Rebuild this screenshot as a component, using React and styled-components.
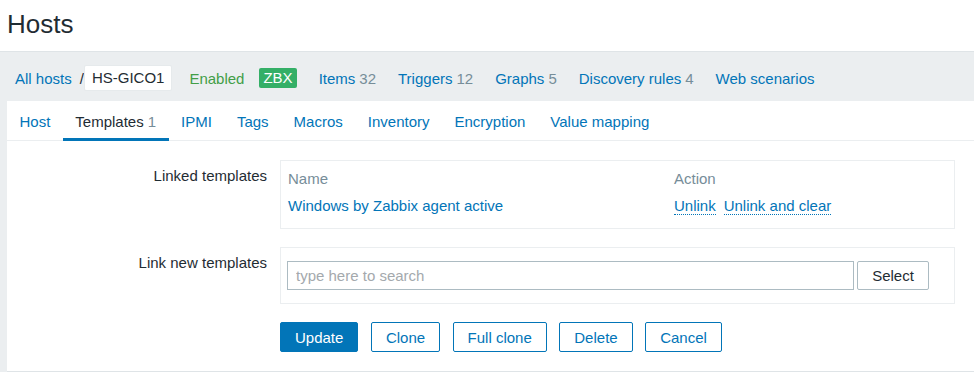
import React from "react";
import styled, { createGlobalStyle } from "styled-components";

const Global = createGlobalStyle`
  html, body {
    margin: 0;
    padding: 0;
    background: #ffffff;
    overflow: hidden;
  }
  body {
    font-family: "Liberation Sans", Arial, sans-serif;
    font-size: 15px;
    color: #1f2c33;
  }
`;

const Page = styled.div`
  width: 992px;
  height: 372px;
  display: flex;
  flex-direction: column;
`;

const Header = styled.div`
  height: 51px;
  display: flex;
  align-items: center;
  padding-left: 7px;
  border-bottom: 1px solid #dfe4e7;
`;

const Title = styled.h1`
  margin: 0;
  margin-top: -3px;
  font-size: 26px;
  font-weight: 400;
  color: #1f2c33;
`;

const Body = styled.div`
  flex: 1;
  background: #ebeef0;
  display: flex;
  flex-direction: column;
  padding-left: 7px;
`;

const Crumbs = styled.div`
  height: 46px;
  padding-top: 3px;
  display: flex;
  align-items: center;
  padding-left: 8px;
`;

const CrumbLink = styled.a`
  color: #0275b8;
  text-decoration: none;
  margin-right: ${(p) => p.$gap ?? 22}px;
  white-space: nowrap;
`;

const Sep = styled.span`
  color: #1f2c33;
  margin: 0 0 0 8px;
`;

const HostBox = styled.span`
  background: #fff;
  border: 1px solid #e6eaec;
  padding: 2px 7px;
  height: 20px;
  line-height: 20px;
  border-radius: 2px;
  margin-right: 17px;
`;

const Enabled = styled.span`
  color: #429e47;
  margin-right: 15px;
`;

const Badge = styled.span`
  background: #34af67;
  color: #fff;
  padding: 0 4px;
  height: 20px;
  line-height: 20px;
  border-radius: 2px;
  margin-right: 22px;
`;

const Count = styled.span`
  color: #768d99;
  margin-left: 4px;
`;

const Panel = styled.div`
  flex: 1;
  background: #fff;
  border-bottom: 1px solid #dfe4e7;
  display: flex;
  flex-direction: column;
`;

const Tabs = styled.div`
  height: 39px;
  display: flex;
  border-bottom: 1px solid #ebeef0;
`;

const Tab = styled.a`
  padding: 4px 12.5px 0;
  display: flex;
  align-items: center;
  color: ${(p) => (p.$active ? "#1f2c33" : "#0275b8")};
  text-decoration: none;
  border-bottom: 3px solid ${(p) => (p.$active ? "#0275b8" : "transparent")};
  margin-bottom: -1px;
`;

const Form = styled.div`
  display: grid;
  grid-template-columns: 260px 675px;
  column-gap: 13px;
  row-gap: 18px;
  padding-top: 19px;
`;

const Label = styled.div`
  text-align: right;
  padding-top: 7px;
`;

const Box = styled.div`
  border: 1px solid #ebeef0;
  padding: ${(p) => p.$pad};
`;

const Table = styled.table`
  width: 100%;
  border-collapse: collapse;
  td,
  th {
    text-align: left;
    font-weight: 400;
  }
  th {
    color: #768d99;
    line-height: 22px;
    padding: 7px 0 0;
  }
  td {
    line-height: 23px;
    padding: 4px 0 11px;
  }
`;

const Link = styled.a`
  color: #0275b8;
  text-decoration: none;
`;

const Dotted = styled.a`
  color: #0275b8;
  text-decoration: none;
  border-bottom: 1px dotted #0275b8;
  margin-right: 8px;
`;

const MultiRow = styled.div`
  display: flex;
  gap: 3px;
`;

const Input = styled.input`
  width: 567px;
  height: 29px;
  box-sizing: border-box;
  border: 1px solid #acbbc2;
  padding: 0 8px;
  font-family: inherit;
  font-size: 15px;
  color: #1f2c33;
  &::placeholder {
    color: #a4a9ad;
  }
`;

const SelectBtn = styled.button`
  width: 72px;
  height: 29px;
  background: #fff;
  border: 1px solid #acbbc2;
  border-radius: 2px;
  font-family: inherit;
  font-size: 15px;
  color: #1f2c33;
`;

const Actions = styled.div`
  display: flex;
  gap: 12.5px;
`;

const Button = styled.button`
  height: 30px;
  padding: 0 ${(p) => p.$px || 14}px;
  border: 1px solid #0275b8;
  border-radius: 2px;
  background: ${(p) => (p.$primary ? "#0275b8" : "#fff")};
  color: ${(p) => (p.$primary ? "#fff" : "#0275b8")};
  font-family: inherit;
  font-size: 15px;
`;

export default function App() {
  return (
    <Page>
      <Global />
      <Header>
        <Title>Hosts</Title>
      </Header>
      <Body>
        <Crumbs>
          <CrumbLink $gap={0}>All hosts</CrumbLink>
          <Sep>/</Sep>
          <HostBox>HS-GICO1</HostBox>
          <Enabled>Enabled</Enabled>
          <Badge>ZBX</Badge>
          <CrumbLink>
            Items<Count>32</Count>
          </CrumbLink>
          <CrumbLink>
            Triggers<Count>12</Count>
          </CrumbLink>
          <CrumbLink>
            Graphs<Count>5</Count>
          </CrumbLink>
          <CrumbLink>
            Discovery rules<Count>4</Count>
          </CrumbLink>
          <CrumbLink>Web scenarios</CrumbLink>
        </Crumbs>
        <Panel>
          <Tabs>
            <Tab>Host</Tab>
            <Tab $active>
              Templates<Count>1</Count>
            </Tab>
            <Tab>IPMI</Tab>
            <Tab>Tags</Tab>
            <Tab>Macros</Tab>
            <Tab>Inventory</Tab>
            <Tab>Encryption</Tab>
            <Tab>Value mapping</Tab>
          </Tabs>
          <Form>
            <Label>Linked templates</Label>
            <Box $pad="0 7px">
              <Table>
                <thead>
                  <tr>
                    <th style={{ width: 386 }}>Name</th>
                    <th>Action</th>
                  </tr>
                </thead>
                <tbody>
                  <tr>
                    <td>
                      <Link>Windows by Zabbix agent active</Link>
                    </td>
                    <td>
                      <Dotted>Unlink</Dotted>
                      <Dotted>Unlink and clear</Dotted>
                    </td>
                  </tr>
                </tbody>
              </Table>
            </Box>
            <Label>Link new templates</Label>
            <Box $pad="13px 6px">
              <MultiRow>
                <Input placeholder="type here to search" />
                <SelectBtn>Select</SelectBtn>
              </MultiRow>
            </Box>
            <div />
            <Actions>
              <Button $primary>Update</Button>
              <Button>Clone</Button>
              <Button>Full clone</Button>
              <Button>Delete</Button>
              <Button>Cancel</Button>
            </Actions>
          </Form>
        </Panel>
      </Body>
    </Page>
  );
}
